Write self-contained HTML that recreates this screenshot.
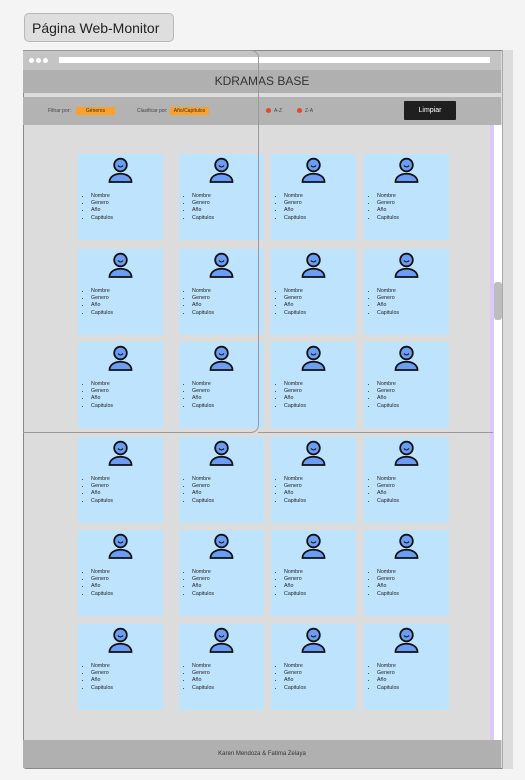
<!DOCTYPE html>
<html><head><meta charset="utf-8"><style>
*{margin:0;padding:0;box-sizing:border-box}
body{width:525px;height:780px;background:#f4f4f4;position:relative;overflow:hidden;font-family:"Liberation Sans",sans-serif}
.a{position:absolute}
.card{position:absolute;width:85px;height:86px;background:#bee3fd}
.card svg{position:absolute;left:30px;top:3px}
.card ul{position:absolute;left:13px;top:39px;font-size:5.3px;line-height:7.2px;color:#222;list-style:disc}
</style></head><body>
<div class="a" style="left:24px;top:13px;width:150px;height:29px;background:#dedede;border:1px solid #b8b8b8;border-radius:5px;font-size:14px;color:#222;line-height:28px;padding-left:7px">Página Web-Monitor</div>
<div class="a" style="left:23px;top:50px;width:490px;height:719px;background:#dcdcdc;border:1px solid #888;border-radius:3px"></div>
<div class="a" style="left:23px;top:51px;width:478px;height:19px;background:#c4c4c4"></div>
<div class="a" style="left:29px;top:58px;width:5px;height:5px;border-radius:50%;background:#fff"></div>
<div class="a" style="left:36px;top:58px;width:5px;height:5px;border-radius:50%;background:#fff"></div>
<div class="a" style="left:43px;top:58px;width:5px;height:5px;border-radius:50%;background:#fff"></div>
<div class="a" style="left:59px;top:57px;width:431px;height:6px;background:#fff"></div>
<div class="a" style="left:23px;top:70px;width:478px;height:23px;background:#b0b0b0;font-size:12px;color:#333;text-align:center;line-height:23px">KDRAMAS BASE</div>
<div class="a" style="left:23px;top:97px;width:478px;height:28px;background:#b3b3b3"></div>
<div class="a" style="left:48px;top:108px;font-size:5px;color:#444">Filtrar por:</div>
<div class="a" style="left:76px;top:107px;width:39px;height:8px;background:#f9a12a;font-size:5px;color:#333;text-align:center;line-height:8px">Géneros</div>
<div class="a" style="left:137px;top:108px;font-size:5px;color:#444">Clasificar por:</div>
<div class="a" style="left:170px;top:107px;width:39px;height:8px;background:#f9a12a;font-size:5px;color:#333;text-align:center;line-height:8px">Año/Capítulos</div>
<div class="a" style="left:266px;top:108px;width:5px;height:5px;border-radius:50%;background:#e8462a"></div>
<div class="a" style="left:274px;top:108px;font-size:5px;color:#444">A-Z</div>
<div class="a" style="left:297px;top:108px;width:5px;height:5px;border-radius:50%;background:#e8462a"></div>
<div class="a" style="left:305px;top:108px;font-size:5px;color:#444">Z-A</div>
<div class="a" style="left:404px;top:101px;width:52px;height:19px;background:#1f1f1f;color:#fff;font-size:7px;text-align:center;line-height:19px;border-radius:1px">Limpiar</div>
<div class="a" style="left:502px;top:50px;width:11px;height:719px;background:#dcdcdc;border-left:1px solid #aaa"></div>
<div class="a" style="left:490px;top:125px;width:12px;height:615px;background:#dcc9fa"></div>
<div class="a" style="left:494px;top:125px;width:8px;height:615px;background:#fff"></div>
<div class="a" style="left:494px;top:282px;width:8px;height:38px;background:#bdbdbd;border-radius:3px"></div>
<div class="a" style="left:23px;top:740px;width:478px;height:28px;background:#b0b0b0;font-size:6px;color:#333;text-align:center;line-height:28px">Karen Mendoza &amp; Fatima Zelaya</div>
<div id="g"></div>
<div class="a" style="left:23px;top:50px;width:236px;height:383px;border:1px solid #999;border-left:none;border-radius:0 8px 8px 0"></div>
<div class="a" style="left:258px;top:432px;width:235px;height:1px;background:#999"></div>
<script>
var xs=[78,179,271,364],ys=[154,249,342,437,530,624],h='';
var ic='<svg width="25" height="26" viewBox="0 0 25 26"><path d="M1.5 25 C1.5 14 23.5 14 23.5 25 Z" fill="#6b9df5" stroke="#111" stroke-width="1.8"/><circle cx="12.5" cy="8" r="6.3" fill="#6b9df5" stroke="#111" stroke-width="1.8"/><path d="M10 8.5 Q12.5 11.5 15 8.5" fill="none" stroke="#111" stroke-width="1.1"/></svg>';
ys.forEach(function(y){xs.forEach(function(x){h+='<div class="card" style="left:'+x+'px;top:'+y+'px">'+ic+'<ul><li>Nombre</li><li>Genero</li><li>Año</li><li>Capitulos</li></ul></div>'})});
document.getElementById('g').innerHTML=h;
</script>
</body></html>
